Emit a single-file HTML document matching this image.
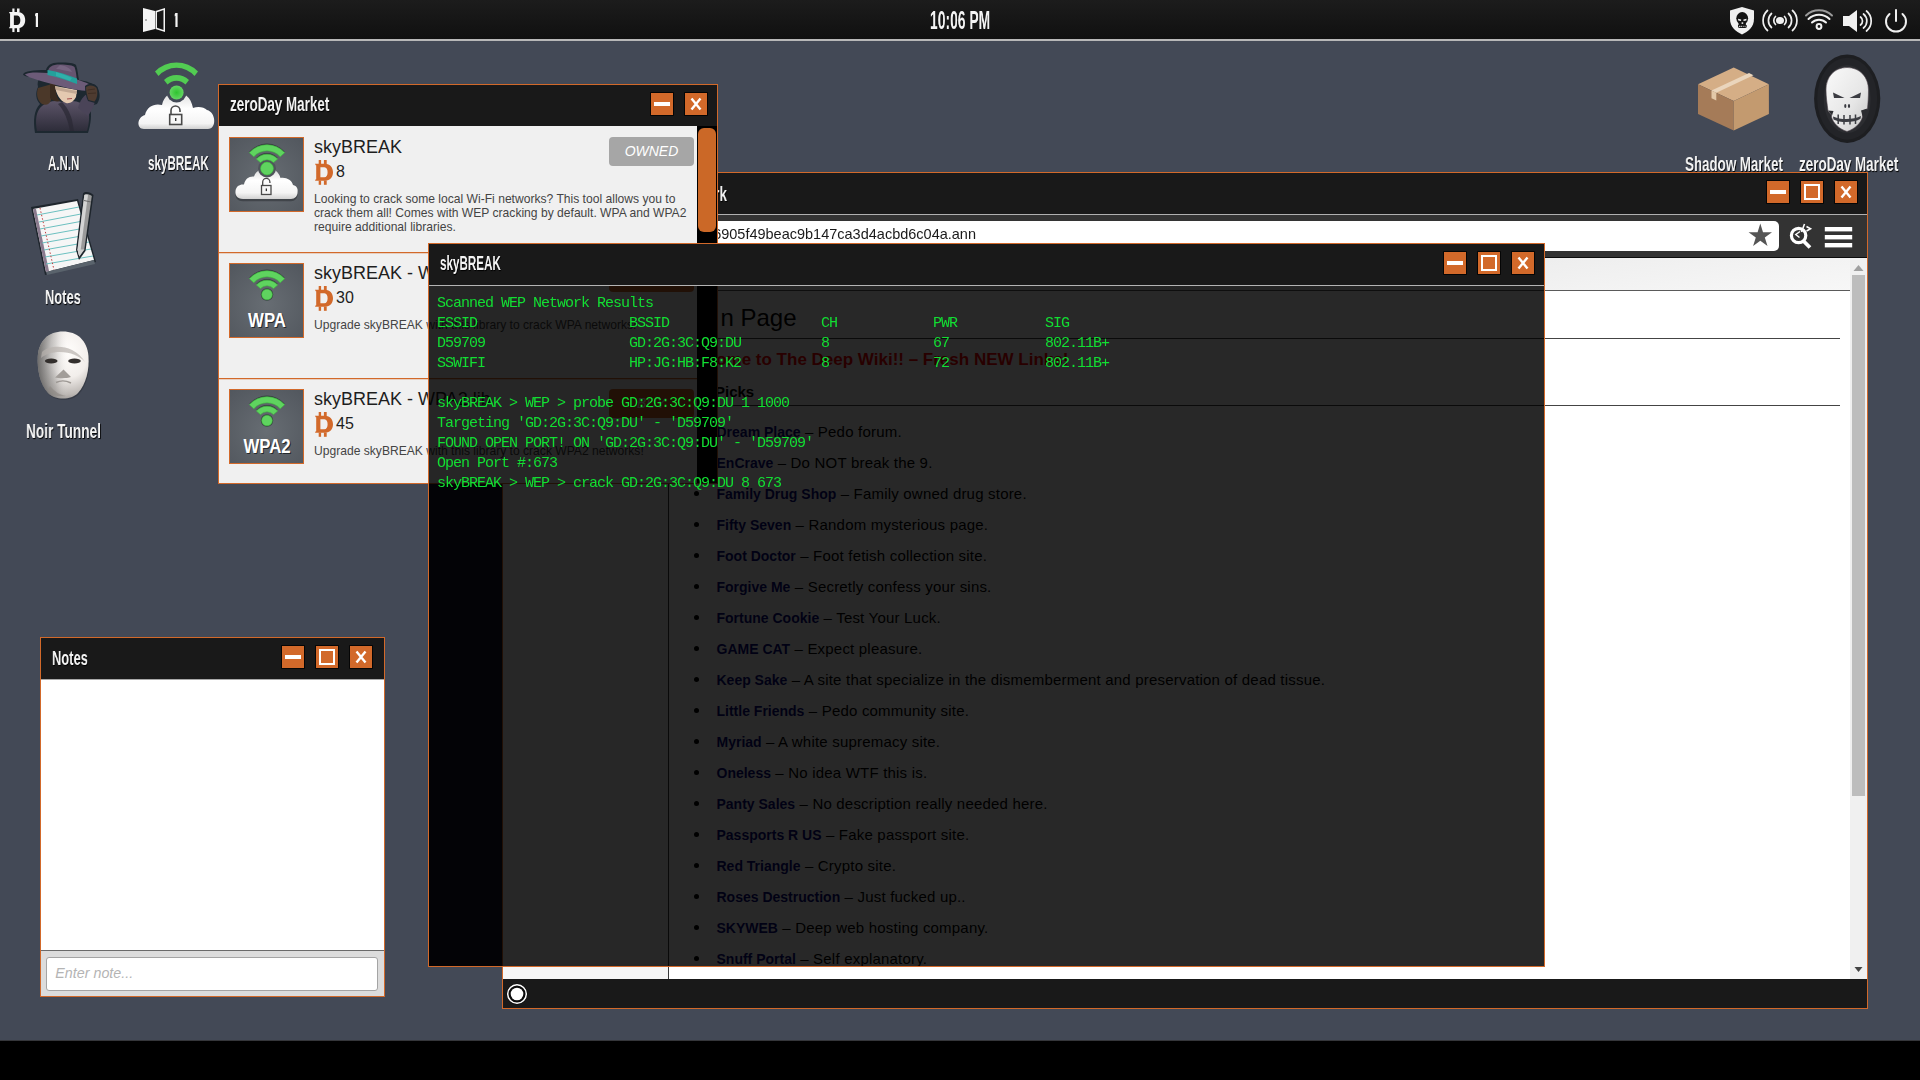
<!DOCTYPE html>
<html><head><meta charset="utf-8">
<style>
*{margin:0;padding:0;box-sizing:border-box}
html,body{width:1920px;height:1080px;overflow:hidden;background:#000}
body{position:relative;font-family:"Liberation Sans",sans-serif}
.abs{position:absolute}
.abs[style*="scaleX"]{will-change:transform}
.mono{font-family:"Liberation Mono",monospace}
</style></head><body>
<div class="abs" style="left:0px;top:0px;width:1920px;height:1040px;background:#434956;"></div>
<div class="abs" style="left:0px;top:1040px;width:1920px;height:1px;background:#35363a;"></div>
<div class="abs" style="left:0;top:0;width:1920px;height:39px;background:linear-gradient(#1c1c1c,#101010)"></div>
<div class="abs" style="left:0px;top:39px;width:1920px;height:2px;background:#b8b8b8;"></div>
<svg class="abs" style="left:0;top:0" width="1920" height="39">
  <!-- bitcoin white -->
  <g fill="#f4f4f4">
    <g transform="translate(9,8.5) scale(.9,.95)"><path d="M0 3.7 H10 C15.2 3.7 18 7.6 18 12.2 C18 16.9 15.2 20.7 10 20.7 H0 L0.7 19.2 H1.2 V5.2 H0.7 Z M5.4 7.3 H9.3 C11.6 7.3 12.6 9.6 12.6 12.2 C12.6 15 11.6 17.3 9.3 17.3 H5.4 Z" fill-rule="evenodd"/><rect x="3.7" y="0" width="2.4" height="4"/><rect x="8.9" y="0" width="2.8" height="4"/><rect x="3.7" y="20.5" width="2.4" height="4.3"/><rect x="8.9" y="20.5" width="2.8" height="4.3"/></g>
    <path d="M35.8 13 H38 V27 H35.8 V15.8 L35.1 16.4 V14.2 Z"/>
    <!-- door -->
    <path d="M143 8 L155 11 V 29 L143 32 Z"/>
    <path d="M155.5 11 L165 8 V32 L155.5 29 Z M157 12.3 V 27.7 L163.5 30 V 10 Z" fill-rule="evenodd"/>
    <path d="M175.4 13 H177.6 V27 H175.4 V15.8 L174.7 16.4 V14.2 Z"/>
  </g>
  <circle cx="146" cy="20" r="0.7" fill="#333"/>
  <!-- right icons -->
  <g fill="none" stroke="#f0f0f0" stroke-width="2" stroke-linecap="round">
    <!-- broadcast -->
    <g stroke-width="1.7"><path d="M1775.5 16.5 a5.5 5.5 0 0 0 0 8"/><path d="M1771.5 13.5 a9.5 9.5 0 0 0 0 14"/><path d="M1767.5 10.5 a13.5 13.5 0 0 0 0 20"/>
    <path d="M1784.5 16.5 a5.5 5.5 0 0 1 0 8"/><path d="M1788.5 13.5 a9.5 9.5 0 0 1 0 14"/><path d="M1792.5 10.5 a13.5 13.5 0 0 1 0 20"/></g>
    <!-- wifi -->
    <path d="M1806 15.5 a19 19 0 0 1 26 0" stroke="#9a9a9a"/>
    <path d="M1808.5 19 a15 15 0 0 1 21 0"/>
    <path d="M1812 22.5 a10 10 0 0 1 14 0"/>
    <circle cx="1819" cy="26.5" r="2.4"/>
    <!-- speaker waves -->
    <g stroke-width="1.7"><path d="M1860.5 17 a5 5 0 0 1 0 8"/><path d="M1863.5 14 a9 9 0 0 1 0 14"/><path d="M1866.5 11 a13 13 0 0 1 0 20"/></g>
    <!-- power -->
    <path d="M1889.5 14 a10 10 0 1 0 13 0"/>
    <path d="M1896 10 v11"/>
  </g>
  <g fill="#f0f0f0">
    <ellipse cx="1780" cy="20.5" rx="4" ry="3.6"/>
    <path d="M1843 16 h6 l8-6 v22 l-8-6 h-6 z"/>
    <path d="M1742 7 l12 3.5 v8 c0 9 -6 13 -12 16 c-6 -3 -12 -7 -12 -16 v-8 z"/>
  </g>
  <g fill="#141414">
    <ellipse cx="1742.2" cy="18.3" rx="5.9" ry="6.2"/>
    <rect x="1738.5" y="21" width="7.4" height="4"/>
    <path d="M1738 25 h8.7 v2.2 c-1.5 1.2 -7 1.2 -8.7 0 z"/>
  </g>
  <g fill="#f0f0f0">
    <path d="M1738 18.8 L1741.2 19.6 L1741 20.9 L1738.3 20.6 Z"/>
    <path d="M1746.6 18.8 L1743.4 19.6 L1743.6 20.9 L1746.3 20.6 Z"/>
    <rect x="1741.6" y="22.3" width="1.6" height="1.6"/>
    <path d="M1739.3 25.9 v1.2 M1741 25.9 v1.2" stroke="#f0f0f0" stroke-width=".6"/>
    <rect x="1739" y="25.8" width=".7" height="1.2"/><rect x="1740.9" y="25.8" width=".7" height="1.2"/><rect x="1742.8" y="25.8" width=".7" height="1.2"/><rect x="1744.7" y="25.8" width=".7" height="1.2"/>
  </g>
  </svg>
<div class="abs" style="left:929.5px;top:7.84px;font-size:25px;line-height:25px;font-weight:bold;color:#f4f4f4;white-space:nowrap;transform:scaleX(0.555);transform-origin:0 0;">10:06 PM</div>
<!-- desktop icons -->
<svg class="abs" style="left:0;top:0" width="1920" height="420">
  <defs>
    <linearGradient id="cloudg" x1="0" y1="0" x2="0" y2="1"><stop offset="0" stop-color="#dcdcdc"/><stop offset=".45" stop-color="#ffffff"/><stop offset=".85" stop-color="#f4f4f4"/><stop offset="1" stop-color="#d0d0d0"/></linearGradient>
    <radialGradient id="greeng" cx=".5" cy=".5" r=".6"><stop offset="0" stop-color="#2fc42f"/><stop offset="1" stop-color="#6ed86e"/></radialGradient>
    <linearGradient id="maskg" x1="0" y1="0" x2="1" y2="1"><stop offset="0" stop-color="#ffffff"/><stop offset=".5" stop-color="#e8e4e2"/><stop offset="1" stop-color="#8e8a88"/></linearGradient>
    <linearGradient id="skullg" x1="0" y1="0" x2="1" y2="1"><stop offset="0" stop-color="#fafafa"/><stop offset=".6" stop-color="#e6e6e6"/><stop offset="1" stop-color="#c4c4c4"/></linearGradient>
    <linearGradient id="coatg" x1="0" y1="0" x2="0" y2="1"><stop offset="0" stop-color="#5c5468"/><stop offset="1" stop-color="#2e2d3a"/></linearGradient>
  </defs>
  <!-- A.N.N detective -->
  <g>
    <g fill="#1d2830">
      <path d="M35 133 C 33 120 34 110 40 104 C 36 100 35 93 38 87 C 37 83 38 80 40 78 C 32 77 24 77 23 74.5 C 24 71 34 70 46 70 C 47 65 52 62 60 62.5 C 68 62.5 74 63 76 65 C 78 70 78 76 79 80 C 86 81 93 83 97 87 C 100 92 101 98 97 104 L 90 106 C 92 114 91 124 88 133 Z"/>
    </g>
    <path d="M37 131 C 35 120 36 111 42 106 C 48 101 56 100 62 102 L 72 101 C 78 101 84 104 88 108 C 90 116 89 124 87 131 Z" fill="url(#coatg)"/>
    <path d="M62 102 C 66 106 70 112 72 120 L 74 131 L 70 131 C 68 120 64 110 58 104 Z" fill="#2a2833" opacity=".7"/>
    <path d="M78 108 C 80 100 84 95 89 93 L 96 97 C 95 104 92 110 88 116 Z" fill="#4a4458"/>
    
    <path d="M38 88 C 36 94 37 100 42 104 C 46 106 50 104 51 100 L 52 84 Z" fill="#4b3829"/>
    <path d="M50 81 L 56 83 C 55 90 56 97 60 101 C 57 102 52 101 50 98 Z" fill="#3a2b20"/>
    <path d="M55 86 C 56 94 60 101 66 103 C 70 104 74 101 76 97 L 77 90 C 70 89 62 87 55 86 Z" fill="#e4c9b0"/>
    <path d="M55 86 C 62 88 70 90 77 91 L 77 94 C 70 93 62 91 56 90 Z" fill="#b9a08c" opacity=".8"/>
    <path d="M67 99 L 72 98.5" stroke="#a44d4d" stroke-width="1.2"/>
    <path d="M25 74.5 C 28 72 38 72 48 73 C 60 74 74 78 84 82 C 90 84 95 87 95 90 C 88 92 74 90 60 86 C 44 82 28 78 25 74.5 Z" fill="#6c5b78"/>
    <path d="M48 72 C 48 67 52 64.5 60 64.5 C 68 64.5 73 65.5 74.5 67 C 76 71 76.5 76 77 82 C 68 79 58 76 48 73 Z" fill="#665470"/>
    <path d="M60 65 C 66 66 70 68 72 72 C 66 71 60 69 56 69 Z" fill="#7a6986" opacity=".8"/>
    <path d="M47.5 70 C 58 71.5 68 75 77 78.5 L 77 84 C 68 80.5 58 77 47.5 75 Z" fill="#24a09c"/>
    <path d="M56 72 C 62 74 68 76 72 78 L 70 81 C 65 79 60 77 56 76 Z" fill="#3cc0b8" opacity=".5"/>
    <path d="M85 86 C 89 82.5 95 83 97.5 87 C 99.5 92 98.5 99 95 103 L 88 101 C 86 97 85 91 85 86 Z" fill="#1d2830"/><path d="M86 87 C 89 84.5 94.5 85 96.5 88 C 98 92 97.5 98 94.5 101.5 L 88.5 100 C 87 96 86 91 86 87 Z" fill="#4e3b30"/><path d="M87.5 90 L 95 89 M88 93.5 L 96 93" stroke="#3a2a20" stroke-width=".8"/>
  </g>
  <!-- skyBREAK cloud -->
  <g>
    <path d="M144 129 C 136 129 137 117 145 115 C 147 106 155 103 162 105 C 164 96 170 92 176 92 C 184 92 191 97 193 108 C 198 106 204 107 207 110 C 216 112 217 129 208 129 Z" fill="url(#cloudg)"/>
    <circle cx="176.6" cy="92.5" r="10" fill="#434a56"/>
    <circle cx="176.6" cy="92.5" r="7" fill="url(#greeng)"/>
    <path d="M155 71.5 A 30 30 0 0 1 198 71.5 L 194.5 76 A 24 24 0 0 0 158.5 76 Z" fill="#52cc52"/>
    <path d="M164 80 A 18 18 0 0 1 189 80 L 185.5 84.5 A 12.5 12.5 0 0 0 167.5 84.5 Z" fill="#52cc52"/>
    <rect x="169.7" y="114.5" width="12" height="10" fill="none" stroke="#4a4a4a" stroke-width="1.6"/>
    <path d="M171 114.5 v-4 a4.5 4.5 0 0 1 9 0 v1.5" fill="none" stroke="#4a4a4a" stroke-width="1.6"/>
    <rect x="175" y="118" width="1.4" height="3" fill="#333"/>
  </g>
  <!-- Notes notepad -->
  <g>
    <path d="M31 207 L 78 199 L 96 262 L 45 275 Z" fill="#1e252c"/>
    <path d="M33 209 L 77 201 L 94 260 L 46 272 Z" fill="#f6f6f6"/>
    <path d="M33 209 L 36 209 L 49 271 L 46 272 Z" fill="#8a7a8e"/>
    <path d="M46 272 L 94 260 L 95 264 L 47 275 Z" fill="#5a636c"/>
    <g stroke="#6cc0c0" stroke-width="1">
      <path d="M37 215 L 79 207"/><path d="M39 222 L 81 214"/><path d="M40 229 L 83 221"/><path d="M41 236 L 85 228"/><path d="M42 243 L 87 235"/><path d="M44 250 L 89 242"/><path d="M45 257 L 91 249"/><path d="M46 264 L 93 256"/>
    </g>
    <path d="M40 208 L 54 270" stroke="#c04040" stroke-width="1" stroke-dasharray="1.5 2"/>
    <path d="M83 193.5 C 85 191 90.5 192 93.5 195 L 85.5 251 L 79 260 L 76 250 Z" fill="#1e252c"/>
    <path d="M84.3 195 C 86 193.5 89.5 194 91.8 196 L 84.3 249.5 L 79.3 256.5 L 77.5 249.5 Z" fill="#9a9a9a"/>
    <path d="M84.3 195 C 85.5 194.3 87 194.5 88 195 L 80.5 251 L 79.3 256.5 L 77.5 249.5 Z" fill="#d4d4d4"/>
    <path d="M84 200.5 L 91 202" stroke="#6a6a6a" stroke-width="1"/>
    <path d="M77.5 249.5 L 84.3 249.5 L 79.3 256.5 Z" fill="#cfcfcf"/>
    </g>
  <!-- Noir tunnel mask -->
  <g>
    <defs>
      <linearGradient id="maskl" x1="0" y1="0" x2="1" y2="0"><stop offset="0" stop-color="#555" stop-opacity=".75"/><stop offset=".35" stop-color="#777" stop-opacity=".25"/><stop offset=".6" stop-color="#fff" stop-opacity="0"/></linearGradient>
      <radialGradient id="maskr" cx=".62" cy=".3" r=".85"><stop offset="0" stop-color="#fffdfb"/><stop offset=".45" stop-color="#f2eeeb"/><stop offset=".75" stop-color="#bdb8b4"/><stop offset="1" stop-color="#6e6a68"/></radialGradient>
    </defs>
    <path d="M 63 331.5 C 77 331.5 87 340 88.5 356 C 89.5 370 86 384 78 393 C 74 397 69 398.5 63 398.5 C 57 398.5 52 397 48 393 C 40 384 37 370 37.8 356 C 39 340 49 331.5 63 331.5 Z" fill="#2a2e36" opacity=".5" transform="translate(.8,1.2)"/>
    <path d="M 63 331.5 C 77 331.5 87 340 88.5 356 C 89.5 370 86 384 78 393 C 74 397 69 398.5 63 398.5 C 57 398.5 52 397 48 393 C 40 384 37 370 37.8 356 C 39 340 49 331.5 63 331.5 Z" fill="url(#maskr)"/>
    <path d="M 63 331.5 C 77 331.5 87 340 88.5 356 C 89.5 370 86 384 78 393 C 74 397 69 398.5 63 398.5 C 57 398.5 52 397 48 393 C 40 384 37 370 37.8 356 C 39 340 49 331.5 63 331.5 Z" fill="url(#maskl)"/>
    <path d="M 42 352 C 48 346 62 345 72 350 C 78 353 82 357 85 362 C 80 356 70 352 60 352 C 52 352 46 354 41 358 Z" fill="#b8b2ae" opacity=".7"/>
    <ellipse cx="51.2" cy="361" rx="6.3" ry="2.4" fill="#332f2d"/>
    <ellipse cx="74.5" cy="361" rx="6.3" ry="2.4" fill="#332f2d"/>
    <path d="M 55 377.5 L 63.5 369.5 L 71 377 C 67 378.5 59 378.5 55 377.5 Z" fill="#a29d99"/>
    <path d="M 56 382.5 C 60 380.5 66 380.5 71 383" stroke="#9d9894" stroke-width="1.4" fill="none"/>
    <path d="M 50 386 C 55 392 60 395 66 396 C 58 397 52 395 48 391 Z" fill="#8d8884" opacity=".6"/>
  </g>
  <!-- Shadow Market box -->
  <g>
    <path d="M1698 84.3 L 1733.7 67.6 L 1768.9 84.3 L 1733.7 101 Z" fill="#d5ae86"/>
    <path d="M1698 84.3 L 1733.7 101 L 1733.7 130.6 L 1698 113.9 Z" fill="#a57b58"/>
    <path d="M1733.7 101 L 1768.9 84.3 L 1768.9 113.9 L 1733.7 130.6 Z" fill="#c39a6f"/>
    <path d="M1711.5 90.5 L 1749 73 L 1753.5 75.2 L 1716.3 92.8 Z" fill="#ead5bc"/>
    <path d="M1711.5 90.5 L 1716.3 92.8 L 1716.3 100.5 L 1711.5 98.2 Z" fill="#e3c8a8"/>
  </g>
  <!-- zeroDay skull -->
  <g>
    <ellipse cx="1847.2" cy="98.7" rx="33.1" ry="44.2" fill="#1d1e21"/>
    <ellipse cx="1847.2" cy="98.7" rx="30" ry="41" fill="#232428"/>
    <ellipse cx="1847.2" cy="99" rx="23.5" ry="34" fill="#2c2d31"/>
    <path d="M1847 67.5 C 1860 67.5 1868.5 77 1868.5 90 C 1868.5 97 1868 103 1867.5 109 L 1862.5 111 L 1862.5 117 C 1861 123 1855 129 1847 131.5 C 1839 129 1833 123 1831.5 117 L 1831.5 115 L 1828 111 C 1827 103 1826 97 1826 90 C 1826 77 1834 67.5 1847 67.5 Z" fill="url(#skullg)" stroke="#4a3f48" stroke-width=".6"/>
    <path d="M1828 110.5 L 1833.5 111 L 1832 115.5 Z" fill="#2c2d31"/>
    <path d="M1867.5 108.5 L 1861 110.5 L 1862.5 116 Z" fill="#2c2d31"/>
    <path d="M1833 92.6 L 1844.5 98 L 1834 98 Z" fill="#3b3c42"/>
    <path d="M1861 92.6 L 1849.5 98 L 1860 98 Z" fill="#3b3c42"/>
    <ellipse cx="1845.3" cy="106" rx="1.1" ry="1.9" fill="#3b3c42"/>
    <ellipse cx="1849" cy="106" rx="1.1" ry="1.9" fill="#3b3c42"/>
    <path d="M1833 116.5 C 1840 120 1854 120 1861 116 L 1860.5 118.8 C 1854 123 1840 123 1833.5 119.5 Z" fill="#3b3c42"/>
    <path d="M1838.2 114.5 V 124 M1844 115 V 124.5 M1850 115 V 124.5 M1855.5 114.5 V 124" stroke="#3b3c42" stroke-width="1.5"/>
  </g>
</svg>
<div class="abs" style="left:47.5px;top:152.85px;font-size:20.5px;line-height:20.5px;font-weight:bold;color:#f4f4f4;text-shadow:1px 1px 1px #000;white-space:nowrap;transform:scaleX(0.563);transform-origin:0 0;">A.N.N</div>
<div class="abs" style="left:147.5px;top:152.85px;font-size:20.5px;line-height:20.5px;font-weight:bold;color:#f4f4f4;text-shadow:1px 1px 1px #000;white-space:nowrap;transform:scaleX(0.568);transform-origin:0 0;">skyBREAK</div>
<div class="abs" style="left:45.4px;top:286.55px;font-size:20.5px;line-height:20.5px;font-weight:bold;color:#f4f4f4;text-shadow:1px 1px 1px #000;white-space:nowrap;transform:scaleX(0.63);transform-origin:0 0;">Notes</div>
<div class="abs" style="left:25.9px;top:420.65px;font-size:20.5px;line-height:20.5px;font-weight:bold;color:#f4f4f4;text-shadow:1px 1px 1px #000;white-space:nowrap;transform:scaleX(0.667);transform-origin:0 0;">Noir Tunnel</div>
<div class="abs" style="left:1684.9px;top:153.55px;font-size:20.5px;line-height:20.5px;font-weight:bold;color:#f4f4f4;text-shadow:1px 1px 1px #000;white-space:nowrap;transform:scaleX(0.651);transform-origin:0 0;">Shadow Market</div>
<div class="abs" style="left:1798.5px;top:153.55px;font-size:20.5px;line-height:20.5px;font-weight:bold;color:#f4f4f4;text-shadow:1px 1px 1px #000;white-space:nowrap;transform:scaleX(0.655);transform-origin:0 0;">zeroDay Market</div>
<div class="abs" style="left:40px;top:637px;width:345px;height:360px;border:1px solid #d2692a;background:#fff"></div>
<div class="abs" style="left:41px;top:638px;width:343px;height:41px;background:#191919;"></div>
<div class="abs" style="left:41px;top:679px;width:343px;height:1px;background:#a8a8a8;"></div>
<div class="abs" style="left:51.7px;top:647.65px;font-size:20.5px;line-height:20.5px;font-weight:bold;color:#f4f4f4;text-shadow:1px 1px 1px #000;white-space:nowrap;transform:scaleX(0.63);transform-origin:0 0;">Notes</div>
<div class="abs" style="left:281px;top:645px;width:24px;height:24px;background:#050505;border-radius:1px"></div>
<div class="abs" style="left:282px;top:646px;width:22px;height:22px;background:#d2692a"></div>
<div class="abs" style="left:285px;top:655px;width:16px;height:4px;background:#fff;"></div>
<div class="abs" style="left:315px;top:645px;width:24px;height:24px;background:#050505;border-radius:1px"></div>
<div class="abs" style="left:316px;top:646px;width:22px;height:22px;background:#d2692a"></div>
<div class="abs" style="left:319px;top:649px;width:16px;height:16px;border:2px solid #fff;box-sizing:border-box"></div>
<div class="abs" style="left:349px;top:645px;width:24px;height:24px;background:#050505;border-radius:1px"></div>
<div class="abs" style="left:350px;top:646px;width:22px;height:22px;background:#d2692a"></div>
<svg class="abs" style="left:349px;top:645px" width="24" height="24"><path d="M7.5 6.5 L16.5 17.5 M16.5 6.5 L7.5 17.5" stroke="#fff" stroke-width="2.4" stroke-linecap="butt"/></svg>
<div class="abs" style="left:41px;top:950px;width:343px;height:46px;background:#dcdcdc;border-top:1px solid #6a6a6a"></div>
<div class="abs" style="left:46px;top:957px;width:332px;height:34px;background:#fff;border:1px solid #a4a4a4;border-radius:3px"></div>
<div class="abs" style="left:55.3px;top:966.40px;font-size:14.3px;line-height:14.3px;font-weight:normal;font-style:italic;color:#b4b4b4;white-space:nowrap;">Enter note...</div>
<div class="abs" style="left:502px;top:172px;width:1366px;height:837px;border:1px solid #d2692a;background:#191919"></div>
<div class="abs" style="left:503px;top:173px;width:1364px;height:41px;background:#191919;"></div>
<div class="abs" style="left:503px;top:214px;width:1364px;height:1px;background:#b0b0b0;"></div>
<div class="abs" style="left:0;top:183.6px;width:727px;text-align:right;font-size:20.5px;line-height:20.5px;font-weight:bold;color:#f4f4f4;text-shadow:1px 1px 1px #000;white-space:nowrap;transform:scaleX(.655);transform-origin:727px 0">The Deep Wiki Network</div>
<div class="abs" style="left:1766px;top:180px;width:24px;height:24px;background:#050505;border-radius:1px"></div>
<div class="abs" style="left:1767px;top:181px;width:22px;height:22px;background:#d2692a"></div>
<div class="abs" style="left:1770px;top:190px;width:16px;height:4px;background:#fff;"></div>
<div class="abs" style="left:1800px;top:180px;width:24px;height:24px;background:#050505;border-radius:1px"></div>
<div class="abs" style="left:1801px;top:181px;width:22px;height:22px;background:#d2692a"></div>
<div class="abs" style="left:1804px;top:184px;width:16px;height:16px;border:2px solid #fff;box-sizing:border-box"></div>
<div class="abs" style="left:1834px;top:180px;width:24px;height:24px;background:#050505;border-radius:1px"></div>
<div class="abs" style="left:1835px;top:181px;width:22px;height:22px;background:#d2692a"></div>
<svg class="abs" style="left:1834px;top:180px" width="24" height="24"><path d="M7.5 6.5 L16.5 17.5 M16.5 6.5 L7.5 17.5" stroke="#fff" stroke-width="2.4" stroke-linecap="butt"/></svg>
<div class="abs" style="left:503px;top:215px;width:1364px;height:42px;background:#333333;"></div>
<div class="abs" style="left:503px;top:257px;width:1364px;height:1px;background:#0c0c0c;"></div>
<div class="abs" style="left:560px;top:221px;width:1219px;height:30px;background:#fff;border-radius:5px"></div>
<div class="abs" style="left:0;top:227px;width:976px;text-align:right;font-size:14.5px;line-height:15px;color:#1a1a1a;white-space:nowrap;overflow:hidden">deepwiki://6905f49beac9b147ca3d4acbd6c04a.ann</div>
<svg class="abs" style="left:1742px;top:218.5px" width="124" height="40">
    <path d="M18.3 4.6 L21 13.2 L30 13.2 L22.8 18.4 L25.5 27 L18.3 21.7 L11.1 27 L13.8 18.4 L6.6 13.2 L15.6 13.2 Z" fill="#555"/>
    <circle cx="56.6" cy="16.5" r="7.2" fill="#333" stroke="#fff" stroke-width="3.2"/>
    <path d="M61.5 22 L68 28.5" stroke="#fff" stroke-width="3.8"/>
    <path d="M58 12.5 L53.8 15.5 L57.5 18.5" fill="none" stroke="#fff" stroke-width="1.5"/>
    <path d="M62.5 5 L59.5 13" stroke="#fff" stroke-width="1.6"/>
    <path d="M64.5 7.5 L68.5 9.8 L64.5 12" fill="none" stroke="#fff" stroke-width="1.6"/>
    <rect x="82.8" y="8" width="27.4" height="4.4" fill="#fff"/>
    <rect x="82.8" y="16" width="27.4" height="4.4" fill="#fff"/>
    <rect x="82.8" y="24" width="27.4" height="4.4" fill="#fff"/>
  </svg>
<div class="abs" style="left:503px;top:258px;width:1347px;height:721px;background:#ffffff;"></div>
<div class="abs" style="left:503px;top:258px;width:1347px;height:32px;background:linear-gradient(172deg,#e9e9e9 0%,#f5f5f5 35%,#ececec 60%,#f7f7f7 100%)"></div>
<div class="abs" style="left:503px;top:290px;width:1347px;height:1px;background:#5a5a5a;"></div>
<div class="abs" style="left:503px;top:291px;width:165px;height:688px;background:#f6f6f6;"></div>
<div class="abs" style="left:668px;top:291px;width:1px;height:688px;background:#3a3a3a;"></div>
<div class="abs" style="left:720.5px;top:306.28px;font-size:24px;line-height:24px;font-weight:normal;font-style:normal;color:#000;white-space:nowrap;">n Page</div>
<div class="abs" style="left:669px;top:338px;width:1171px;height:1px;background:#444;"></div>
<div class="abs" style="left:676.8px;top:350.61px;font-size:17px;line-height:17px;font-weight:bold;font-style:normal;color:#ff0000;white-space:nowrap;">Welcome to The Deep Wiki!! – Fresh NEW Links!</div>
<div class="abs" style="left:715px;top:384.30px;font-size:15px;line-height:15px;font-weight:bold;font-style:normal;color:#000;white-space:nowrap;">Picks</div>
<div class="abs" style="left:669px;top:405px;width:1171px;height:1px;background:#444;"></div>
<div class="abs" style="left:694px;top:429.4px;width:5px;height:5px;border-radius:50%;background:#000"></div>
<div class="abs" style="left:716.5px;top:424.20px;font-size:15px;line-height:15px;font-weight:normal;font-style:normal;color:#000;white-space:nowrap;letter-spacing:.2px"><b style="color:#0b0b80;font-size:14px;letter-spacing:0">Dream Place</b> – Pedo forum.</div>
<div class="abs" style="left:694px;top:460.4px;width:5px;height:5px;border-radius:50%;background:#000"></div>
<div class="abs" style="left:716.5px;top:455.20px;font-size:15px;line-height:15px;font-weight:normal;font-style:normal;color:#000;white-space:nowrap;letter-spacing:.2px"><b style="color:#0b0b80;font-size:14px;letter-spacing:0">EnCrave</b> – Do NOT break the 9.</div>
<div class="abs" style="left:694px;top:491.4px;width:5px;height:5px;border-radius:50%;background:#000"></div>
<div class="abs" style="left:716.5px;top:486.20px;font-size:15px;line-height:15px;font-weight:normal;font-style:normal;color:#000;white-space:nowrap;letter-spacing:.2px"><b style="color:#0b0b80;font-size:14px;letter-spacing:0">Family Drug Shop</b> – Family owned drug store.</div>
<div class="abs" style="left:694px;top:522.4px;width:5px;height:5px;border-radius:50%;background:#000"></div>
<div class="abs" style="left:716.5px;top:517.20px;font-size:15px;line-height:15px;font-weight:normal;font-style:normal;color:#000;white-space:nowrap;letter-spacing:.2px"><b style="color:#0b0b80;font-size:14px;letter-spacing:0">Fifty Seven</b> – Random mysterious page.</div>
<div class="abs" style="left:694px;top:553.4px;width:5px;height:5px;border-radius:50%;background:#000"></div>
<div class="abs" style="left:716.5px;top:548.20px;font-size:15px;line-height:15px;font-weight:normal;font-style:normal;color:#000;white-space:nowrap;letter-spacing:.2px"><b style="color:#0b0b80;font-size:14px;letter-spacing:0">Foot Doctor</b> – Foot fetish collection site.</div>
<div class="abs" style="left:694px;top:584.4px;width:5px;height:5px;border-radius:50%;background:#000"></div>
<div class="abs" style="left:716.5px;top:579.20px;font-size:15px;line-height:15px;font-weight:normal;font-style:normal;color:#000;white-space:nowrap;letter-spacing:.2px"><b style="color:#0b0b80;font-size:14px;letter-spacing:0">Forgive Me</b> – Secretly confess your sins.</div>
<div class="abs" style="left:694px;top:615.4px;width:5px;height:5px;border-radius:50%;background:#000"></div>
<div class="abs" style="left:716.5px;top:610.20px;font-size:15px;line-height:15px;font-weight:normal;font-style:normal;color:#000;white-space:nowrap;letter-spacing:.2px"><b style="color:#0b0b80;font-size:14px;letter-spacing:0">Fortune Cookie</b> – Test Your Luck.</div>
<div class="abs" style="left:694px;top:646.4px;width:5px;height:5px;border-radius:50%;background:#000"></div>
<div class="abs" style="left:716.5px;top:641.20px;font-size:15px;line-height:15px;font-weight:normal;font-style:normal;color:#000;white-space:nowrap;letter-spacing:.2px"><b style="color:#0b0b80;font-size:14px;letter-spacing:0">GAME CAT</b> – Expect pleasure.</div>
<div class="abs" style="left:694px;top:677.4px;width:5px;height:5px;border-radius:50%;background:#000"></div>
<div class="abs" style="left:716.5px;top:672.20px;font-size:15px;line-height:15px;font-weight:normal;font-style:normal;color:#000;white-space:nowrap;letter-spacing:.2px"><b style="color:#0b0b80;font-size:14px;letter-spacing:0">Keep Sake</b> – A site that specialize in the dismemberment and preservation of dead tissue.</div>
<div class="abs" style="left:694px;top:708.4px;width:5px;height:5px;border-radius:50%;background:#000"></div>
<div class="abs" style="left:716.5px;top:703.20px;font-size:15px;line-height:15px;font-weight:normal;font-style:normal;color:#000;white-space:nowrap;letter-spacing:.2px"><b style="color:#0b0b80;font-size:14px;letter-spacing:0">Little Friends</b> – Pedo community site.</div>
<div class="abs" style="left:694px;top:739.4px;width:5px;height:5px;border-radius:50%;background:#000"></div>
<div class="abs" style="left:716.5px;top:734.20px;font-size:15px;line-height:15px;font-weight:normal;font-style:normal;color:#000;white-space:nowrap;letter-spacing:.2px"><b style="color:#0b0b80;font-size:14px;letter-spacing:0">Myriad</b> – A white supremacy site.</div>
<div class="abs" style="left:694px;top:770.4px;width:5px;height:5px;border-radius:50%;background:#000"></div>
<div class="abs" style="left:716.5px;top:765.20px;font-size:15px;line-height:15px;font-weight:normal;font-style:normal;color:#000;white-space:nowrap;letter-spacing:.2px"><b style="color:#0b0b80;font-size:14px;letter-spacing:0">Oneless</b> – No idea WTF this is.</div>
<div class="abs" style="left:694px;top:801.4px;width:5px;height:5px;border-radius:50%;background:#000"></div>
<div class="abs" style="left:716.5px;top:796.20px;font-size:15px;line-height:15px;font-weight:normal;font-style:normal;color:#000;white-space:nowrap;letter-spacing:.2px"><b style="color:#0b0b80;font-size:14px;letter-spacing:0">Panty Sales</b> – No description really needed here.</div>
<div class="abs" style="left:694px;top:832.4px;width:5px;height:5px;border-radius:50%;background:#000"></div>
<div class="abs" style="left:716.5px;top:827.20px;font-size:15px;line-height:15px;font-weight:normal;font-style:normal;color:#000;white-space:nowrap;letter-spacing:.2px"><b style="color:#0b0b80;font-size:14px;letter-spacing:0">Passports R US</b> – Fake passport site.</div>
<div class="abs" style="left:694px;top:863.4px;width:5px;height:5px;border-radius:50%;background:#000"></div>
<div class="abs" style="left:716.5px;top:858.20px;font-size:15px;line-height:15px;font-weight:normal;font-style:normal;color:#000;white-space:nowrap;letter-spacing:.2px"><b style="color:#0b0b80;font-size:14px;letter-spacing:0">Red Triangle</b> – Crypto site.</div>
<div class="abs" style="left:694px;top:894.4px;width:5px;height:5px;border-radius:50%;background:#000"></div>
<div class="abs" style="left:716.5px;top:889.20px;font-size:15px;line-height:15px;font-weight:normal;font-style:normal;color:#000;white-space:nowrap;letter-spacing:.2px"><b style="color:#0b0b80;font-size:14px;letter-spacing:0">Roses Destruction</b> – Just fucked up..</div>
<div class="abs" style="left:694px;top:925.4px;width:5px;height:5px;border-radius:50%;background:#000"></div>
<div class="abs" style="left:716.5px;top:920.20px;font-size:15px;line-height:15px;font-weight:normal;font-style:normal;color:#000;white-space:nowrap;letter-spacing:.2px"><b style="color:#0b0b80;font-size:14px;letter-spacing:0">SKYWEB</b> – Deep web hosting company.</div>
<div class="abs" style="left:694px;top:956.4px;width:5px;height:5px;border-radius:50%;background:#000"></div>
<div class="abs" style="left:716.5px;top:951.20px;font-size:15px;line-height:15px;font-weight:normal;font-style:normal;color:#000;white-space:nowrap;letter-spacing:.2px"><b style="color:#0b0b80;font-size:14px;letter-spacing:0">Snuff Portal</b> – Self explanatory.</div>
<div class="abs" style="left:1850px;top:258px;width:17px;height:721px;background:#f0f0f0;"></div>
<div class="abs" style="left:1852px;top:275px;width:13px;height:521px;background:#bdbdbd;"></div>
<svg class="abs" style="left:1850px;top:258px" width="17" height="720"><path d="M3.5 13 L8.5 7 L13.5 13 Z" fill="#a0a0a0"/><path d="M4.5 709 L8.5 714 L12.5 709 Z" fill="#444"/></svg>
<div class="abs" style="left:503px;top:979px;width:1364px;height:29px;background:#191919;"></div>
<svg class="abs" style="left:505px;top:982px" width="24" height="24"><circle cx="12" cy="12" r="10.5" fill="#000" opacity=".6"/><circle cx="12" cy="12" r="9.3" fill="none" stroke="#fff" stroke-width="1.5"/><circle cx="12" cy="12" r="6.3" fill="#fff"/></svg>
<div class="abs" style="left:218px;top:84px;width:500px;height:400px;border:1px solid #d2692a;background:#f0f0f0"></div>
<div class="abs" style="left:219px;top:85px;width:498px;height:41px;background:#191919;"></div>
<div class="abs" style="left:230.4px;top:93.55px;font-size:20.5px;line-height:20.5px;font-weight:bold;color:#f4f4f4;text-shadow:1px 1px 1px #000;white-space:nowrap;transform:scaleX(0.655);transform-origin:0 0;">zeroDay Market</div>
<div class="abs" style="left:650px;top:92px;width:24px;height:24px;background:#050505;border-radius:1px"></div>
<div class="abs" style="left:651px;top:93px;width:22px;height:22px;background:#d2692a"></div>
<div class="abs" style="left:654px;top:102px;width:16px;height:4px;background:#fff;"></div>
<div class="abs" style="left:684px;top:92px;width:24px;height:24px;background:#050505;border-radius:1px"></div>
<div class="abs" style="left:685px;top:93px;width:22px;height:22px;background:#d2692a"></div>
<svg class="abs" style="left:684px;top:92px" width="24" height="24"><path d="M7.5 6.5 L16.5 17.5 M16.5 6.5 L7.5 17.5" stroke="#fff" stroke-width="2.4" stroke-linecap="butt"/></svg>
<div class="abs" style="left:219px;top:252px;width:478px;height:1px;background:#d2692a;box-shadow:0 0.5px 0 rgba(210,105,42,.5)"></div>
<div class="abs" style="left:219px;top:378px;width:478px;height:1px;background:#d2692a;box-shadow:0 0.5px 0 rgba(210,105,42,.5)"></div>
<div class="abs" style="left:697px;top:126px;width:20px;height:357px;background:#000;"></div>
<div class="abs" style="left:698px;top:128px;width:18px;height:104px;background:#cb6827;border-radius:6px"></div>
<svg class="abs" style="left:229px;top:137px" width="76" height="330">
  <defs>
    <radialGradient id="boxg" cx=".5" cy=".55" r=".75"><stop offset="0" stop-color="#676d73"/><stop offset="1" stop-color="#51565d"/></radialGradient>
    <linearGradient id="cloudg2" x1="0" y1="0" x2="0" y2="1"><stop offset="0" stop-color="#d6d6d6"/><stop offset=".4" stop-color="#ffffff"/><stop offset=".8" stop-color="#f4f4f4"/><stop offset="1" stop-color="#d2d2d2"/></linearGradient>
    <g id="wf">
      <g fill="#383c42" transform="translate(0,-1.2)">
        <path d="M20.4 15.64 A 23.7 23.7 0 0 1 55.6 15.64 L 51.15 19.66 A 17.7 17.7 0 0 0 24.85 19.66 Z"/>
        <path d="M27.37 21.93 A 14.3 14.3 0 0 1 48.63 21.93 L 44.54 25.6 A 8.8 8.8 0 0 0 31.46 25.6 Z"/>
      </g>
      <g fill="#5fd35f" stroke="#3cc23c" stroke-width=".6">
        <path d="M20.4 15.64 A 23.7 23.7 0 0 1 55.6 15.64 L 51.15 19.66 A 17.7 17.7 0 0 0 24.85 19.66 Z"/>
        <path d="M27.37 21.93 A 14.3 14.3 0 0 1 48.63 21.93 L 44.54 25.6 A 8.8 8.8 0 0 0 31.46 25.6 Z"/>
      </g>
    </g>
  </defs>
  <!-- item 1 -->
  <rect x="0.5" y="0.5" width="74" height="74" fill="url(#boxg)" stroke="#d2692a" stroke-width="1"/>
  <path d="M14 62 C 8 62 6 58 6.5 54 C 7 49 11 47 15 47.5 C 16 42 20 39 25 39.5 C 27 34 32 31 38 31 C 45 31 50 35 51.5 41 C 57 40 63 43 64 48 C 68 49 69 52 68.6 55 C 68.6 59 66 62 62 62 Z" fill="#2e3237" opacity=".6" transform="translate(0,2.2)"/>
  <path d="M14 62 C 8 62 6 58 6.5 54 C 7 49 11 47 15 47.5 C 16 42 20 39 25 39.5 C 27 34 32 31 38 31 C 45 31 50 35 51.5 41 C 57 40 63 43 64 48 C 68 49 69 52 68.6 55 C 68.6 59 66 62 62 62 Z" fill="url(#cloudg2)"/>
  <circle cx="38" cy="31.5" r="9" fill="#4f545b"/>
  <circle cx="38" cy="31.5" r="6.4" fill="#5fd35f" stroke="#3cc23c" stroke-width=".6"/>
  <use href="#wf"/>
  <rect x="32.5" y="48.5" width="9.5" height="9" fill="none" stroke="#4a4a4a" stroke-width="1.3"/>
  <path d="M33.7 48.5 v-3.5 a3.6 3.6 0 0 1 7.2 0 v1" fill="none" stroke="#4a4a4a" stroke-width="1.3"/>
  <rect x="36.7" y="51.5" width="1.3" height="2.6" fill="#333"/>
  <!-- item 2 -->
  <g transform="translate(0,126)">
    <rect x="0.5" y="0.5" width="74" height="74" fill="url(#boxg)" stroke="#d2692a" stroke-width="1"/>
    <use href="#wf"/>
    <circle cx="38" cy="31.5" r="6.2" fill="#383c42"/>
    <circle cx="38" cy="31.5" r="5.3" fill="#5fd35f" stroke="#3cc23c" stroke-width=".6"/>
    <g transform="translate(38,64.2) scale(.8,1)" font-family="Liberation Sans" font-weight="bold" font-size="21" text-anchor="middle">
      <text x="1.2" y="1.2" fill="#25282c">WPA</text><text x="0" y="0" fill="#ffffff">WPA</text>
    </g>
  </g>
  <!-- item 3 -->
  <g transform="translate(0,252)">
    <rect x="0.5" y="0.5" width="74" height="74" fill="url(#boxg)" stroke="#d2692a" stroke-width="1"/>
    <use href="#wf"/>
    <circle cx="38" cy="31.5" r="6.2" fill="#383c42"/>
    <circle cx="38" cy="31.5" r="5.3" fill="#5fd35f" stroke="#3cc23c" stroke-width=".6"/>
    <g transform="translate(38,64.2) scale(.8,1)" font-family="Liberation Sans" font-weight="bold" font-size="21" text-anchor="middle">
      <text x="1.2" y="1.2" fill="#25282c">WPA2</text><text x="0" y="0" fill="#ffffff">WPA2</text>
    </g>
  </g>
</svg>
<svg class="abs" style="left:315px;top:160px" width="20" height="280">
  <defs><g id="btcD"><path d="M0 3.7 H10 C15.2 3.7 18 7.6 18 12.2 C18 16.9 15.2 20.7 10 20.7 H0 L0.7 19.2 H1.2 V5.2 H0.7 Z M5.4 7.3 H9.3 C11.6 7.3 12.6 9.6 12.6 12.2 C12.6 15 11.6 17.3 9.3 17.3 H5.4 Z" fill-rule="evenodd"/><rect x="3.7" y="0" width="2.4" height="4"/><rect x="8.9" y="0" width="2.8" height="4"/><rect x="3.7" y="20.5" width="2.4" height="4.3"/><rect x="8.9" y="20.5" width="2.8" height="4.3"/></g></defs>
  <g fill="#d2692a"><use href="#btcD" x="0" y="0"/><use href="#btcD" x="0" y="126"/><use href="#btcD" x="0" y="252"/></g>
</svg>
<div class="abs" style="left:314px;top:137.76px;font-size:18px;line-height:18px;font-weight:normal;font-style:normal;color:#1e1e1e;white-space:nowrap;">skyBREAK</div>
<div class="abs" style="left:336px;top:163.76px;font-size:16px;line-height:16px;font-weight:normal;font-style:normal;color:#1e1e1e;white-space:nowrap;">8</div>
<div class="abs" style="left:314px;top:192.96px;font-size:12.1px;line-height:12.1px;font-weight:normal;font-style:normal;color:#444;white-space:nowrap;">Looking to crack some local Wi-Fi networks? This tool allows you to</div>
<div class="abs" style="left:314px;top:206.96px;font-size:12.1px;line-height:12.1px;font-weight:normal;font-style:normal;color:#444;white-space:nowrap;">crack them all! Comes with WEP cracking by default. WPA and WPA2</div>
<div class="abs" style="left:314px;top:220.96px;font-size:12.1px;line-height:12.1px;font-weight:normal;font-style:normal;color:#444;white-space:nowrap;">require additional libraries.</div>
<div class="abs" style="left:609px;top:137px;width:85px;height:29px;background:#a6a6a6;border-radius:4px;color:#fff;font-style:italic;font-size:14px;text-align:center;line-height:28px">OWNED</div>
<div class="abs" style="left:314px;top:263.76px;font-size:18px;line-height:18px;font-weight:normal;font-style:normal;color:#1e1e1e;white-space:nowrap;">skyBREAK - WPA lib</div>
<div class="abs" style="left:336px;top:289.76px;font-size:16px;line-height:16px;font-weight:normal;font-style:normal;color:#1e1e1e;white-space:nowrap;">30</div>
<div class="abs" style="left:314px;top:318.96px;font-size:12.1px;line-height:12.1px;font-weight:normal;font-style:normal;color:#444;white-space:nowrap;">Upgrade skyBREAK with this library to crack WPA networks!</div>
<div class="abs" style="left:609px;top:263px;width:85px;height:29px;background:#d2692a;border-radius:4px;color:#fff;font-style:italic;font-size:14px;text-align:center;line-height:28px">BUY</div>
<div class="abs" style="left:314px;top:389.76px;font-size:18px;line-height:18px;font-weight:normal;font-style:normal;color:#1e1e1e;white-space:nowrap;">skyBREAK - WPA2 lib</div>
<div class="abs" style="left:336px;top:415.76px;font-size:16px;line-height:16px;font-weight:normal;font-style:normal;color:#1e1e1e;white-space:nowrap;">45</div>
<div class="abs" style="left:314px;top:444.96px;font-size:12.1px;line-height:12.1px;font-weight:normal;font-style:normal;color:#444;white-space:nowrap;">Upgrade skyBREAK with this library to crack WPA2 networks!</div>
<div class="abs" style="left:609px;top:389px;width:85px;height:29px;background:#d2692a;border-radius:4px;color:#fff;font-style:italic;font-size:14px;text-align:center;line-height:28px">BUY</div>
<div class="abs" style="left:428px;top:243px;width:1117px;height:724px;border:1px solid #d2692a;background:transparent"></div>
<div class="abs" style="left:429px;top:244px;width:1115px;height:41px;background:#191919;"></div>
<div class="abs" style="left:429px;top:285px;width:1115px;height:1px;background:#b4b4b4;"></div>
<div class="abs" style="left:429px;top:286px;width:1115px;height:680px;background:rgba(0,0,0,.843);"></div>
<div class="abs" style="left:429px;top:484px;width:73px;height:482px;background:#030306;"></div>
<div class="abs" style="left:439.7px;top:253.45px;font-size:20.5px;line-height:20.5px;font-weight:bold;color:#f4f4f4;text-shadow:1px 1px 1px #000;white-space:nowrap;transform:scaleX(0.568);transform-origin:0 0;">skyBREAK</div>
<div class="abs" style="left:1443px;top:251px;width:24px;height:24px;background:#050505;border-radius:1px"></div>
<div class="abs" style="left:1444px;top:252px;width:22px;height:22px;background:#d2692a"></div>
<div class="abs" style="left:1447px;top:261px;width:16px;height:4px;background:#fff;"></div>
<div class="abs" style="left:1477px;top:251px;width:24px;height:24px;background:#050505;border-radius:1px"></div>
<div class="abs" style="left:1478px;top:252px;width:22px;height:22px;background:#d2692a"></div>
<div class="abs" style="left:1481px;top:255px;width:16px;height:16px;border:2px solid #fff;box-sizing:border-box"></div>
<div class="abs" style="left:1511px;top:251px;width:24px;height:24px;background:#050505;border-radius:1px"></div>
<div class="abs" style="left:1512px;top:252px;width:22px;height:22px;background:#d2692a"></div>
<svg class="abs" style="left:1511px;top:251px" width="24" height="24"><path d="M7.5 6.5 L16.5 17.5 M16.5 6.5 L7.5 17.5" stroke="#fff" stroke-width="2.4" stroke-linecap="butt"/></svg>
<pre class="abs mono" style="left:437px;top:294px;font-size:15px;line-height:20px;letter-spacing:-1px;color:#12df32">Scanned WEP Network Results
ESSID                   BSSID                   CH            PWR           SIG
D59709                  GD:2G:3C:Q9:DU          8             67            802.11B+
SSWIFI                  HP:JG:HB:F8:K2          8             72            802.11B+

skyBREAK &gt; WEP &gt; probe GD:2G:3C:Q9:DU 1 1000
Targeting 'GD:2G:3C:Q9:DU' - 'D59709'
FOUND OPEN PORT! ON 'GD:2G:3C:Q9:DU' - 'D59709'
Open Port #:673
skyBREAK &gt; WEP &gt; crack GD:2G:3C:Q9:DU 8 673</pre>
</body></html>
